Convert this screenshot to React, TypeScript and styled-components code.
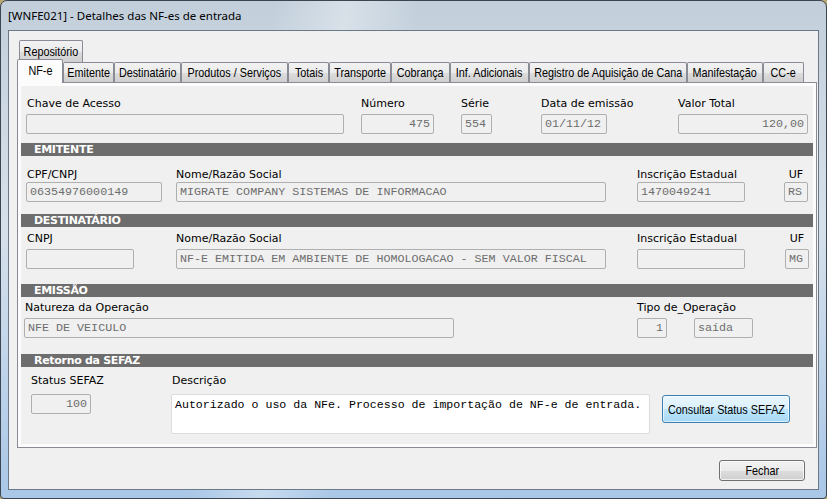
import React from 'react';
import styled, { createGlobalStyle } from 'styled-components';

const GlobalStyle = createGlobalStyle`
  body {
    margin: 0;
    background: #b8a870;
    font-family: "DejaVu Sans", Verdana, sans-serif;
  }
`;

const Window = styled.div`
  box-sizing: border-box;
  display: flex;
  flex-direction: column;
  width: 827px;
  height: 499px;
  padding: 29px 7px 8px 7px;
  border: 1px solid #3b4652;
  border-radius: 7px 7px 4px 4px;
  background:
    linear-gradient(100deg, rgba(255, 255, 255, 0) 30%, rgba(255, 255, 255, 0.35) 38%, rgba(255, 255, 255, 0) 46%),
    linear-gradient(180deg, #c2cfdb 0%, #d6e0ea 45%, #c3d6ea 70%, #a9c7e7 100%);
  position: relative;
`;

const TitleBar = styled.div`
  position: absolute;
  top: 7px;
  left: 7px;
  font-family: "Noto Sans", "Open Sans", sans-serif;
  font-size: 11.5px;
  line-height: 16px;
  color: #000;
`;

const Client = styled.div`
  flex: 1;
  display: flex;
  flex-direction: column;
  background: #f0f0f0;
  border: 1px solid #6b7886;
`;

const TabStrip = styled.div`
  padding-top: 9px;
`;

const TabRow = styled.div<{ $h: number }>`
  display: flex;
  height: ${p => p.$h}px;
  padding-left: 10px;
`;

/* Narrow system font look: Arial squeezed horizontally */
const Narrow = styled.span`
  display: inline-block;
  white-space: nowrap;
  font-family: "Liberation Sans", Arial, sans-serif;
  font-size: 13px;
  transform: scaleX(0.83);
  transform-origin: center;
`;

const Tab = styled.div<{ $w: number; $active?: boolean; $h: number }>`
  box-sizing: border-box;
  position: relative;
  display: flex;
  justify-content: center;
  align-items: ${p => (p.$active ? 'flex-start' : 'center')};
  padding-top: ${p => (p.$active ? 3 : 0)}px;
  width: ${p => p.$w + (p.$active ? 2 : 0)}px;
  height: ${p => p.$h}px;
  margin-left: ${p => (p.$active ? -2 : 0)}px;
  margin-top: ${p => (p.$active ? -3 : 0)}px;
  z-index: ${p => (p.$active ? 2 : 1)};
  border: 1px solid #898c95;
  border-bottom: none;
  border-radius: 2px 2px 0 0;
  background: ${p =>
    p.$active
      ? '#fcfcfc'
      : 'linear-gradient(180deg, #f2f2f2 0%, #ebebeb 50%, #dddddd 51%, #cfcfcf 100%)'};
  line-height: 15px;
  color: #000;
  overflow: visible;
`;

const TabPage = styled.div`
  flex: 1;
  margin: 0 1px 0 8px;
  padding: 3px;
  border: 1px solid #898c95;
  background: #fcfcfc;
  display: flex;
`;

const Content = styled.div`
  flex: 1;
  display: flex;
  flex-direction: column;
  background: #f0f0f0;
`;

const SectionBar = styled.div<{ $mt: number }>`
  height: 13px;
  margin-top: ${p => p.$mt}px;
  padding-left: 13px;
  background: #6d6d6d;
  color: #ffffff;
  font-weight: bold;
  font-size: 11px;
  letter-spacing: -0.3px;
  line-height: 13px;
  white-space: nowrap;
`;

const Row = styled.div<{ $mt: number; $gap: number }>`
  display: flex;
  align-items: flex-start;
  margin-top: ${p => p.$mt}px;
  --label-gap: ${p => p.$gap}px;
`;

const Field = styled.div<{ $w: number; $ml: number }>`
  display: flex;
  flex-direction: column;
  width: ${p => p.$w}px;
  margin-left: ${p => p.$ml}px;
  flex-shrink: 0;
`;

const Label = styled.div<{ $align?: string; $dx?: number }>`
  height: 14px;
  margin-bottom: var(--label-gap);
  padding-left: ${p => p.$dx ?? 0}px;
  font-size: 11px;
  line-height: 14px;
  color: #000;
  white-space: nowrap;
  text-align: ${p => p.$align || 'left'};
`;

const TextBox = styled.div<{ $w?: number; $right?: boolean }>`
  box-sizing: border-box;
  width: ${p => (p.$w ? `${p.$w}px` : '100%')};
  height: 20px;
  padding: 0 3px;
  border: 1px solid #afafaf;
  border-radius: 2px;
  background: #f0f0f0;
  font-family: "Liberation Mono", "Courier New", monospace;
  font-size: 11.7px;
  line-height: 18px;
  color: #6d6d6d;
  white-space: nowrap;
  overflow: hidden;
  text-align: ${p => (p.$right ? 'right' : 'left')};
`;

const Pair = styled.div`
  display: flex;
  gap: 27px;
`;

const TextArea = styled.div`
  box-sizing: border-box;
  height: 40px;
  padding: 3px 3px;
  border: 1px solid #dcdcdc;
  border-radius: 2px;
  background: #ffffff;
  font-family: "Liberation Mono", "Courier New", monospace;
  font-size: 11.6px;
  line-height: 14px;
  color: #000;
  white-space: nowrap;
`;

const Button = styled.button<{ $w: number; $h: number; $focus?: boolean; $mt?: number; $ml?: number }>`
  box-sizing: border-box;
  display: flex;
  justify-content: center;
  align-items: center;
  width: ${p => p.$w}px;
  height: ${p => p.$h}px;
  margin-top: ${p => p.$mt ?? 0}px;
  margin-left: ${p => p.$ml ?? 0}px;
  padding: 0;
  flex-shrink: 0;
  border: 1px solid ${p => (p.$focus ? '#3c7fb1' : '#707070')};
  border-radius: 3px;
  background: ${p =>
    p.$focus
      ? 'linear-gradient(180deg, #eaf6fd 0%, #d9f0fc 50%, #bee6fd 51%, #a7d9f5 100%)'
      : 'linear-gradient(180deg, #f2f2f2 0%, #ebebeb 50%, #dddddd 51%, #cfcfcf 100%)'};
  box-shadow: inset 0 0 0 1px ${p => (p.$focus ? 'rgba(255,255,255,0.6)' : 'rgba(255,255,255,0.7)')};
  color: #000;
  overflow: visible;
`;

const Footer = styled.div`
  display: flex;
  justify-content: flex-end;
  height: 41px;
  box-sizing: border-box;
  padding: 12px 13px 0 0;
`;

const tabs = [
  { label: 'NF-e', w: 44, active: true },
  { label: 'Emitente', w: 51 },
  { label: 'Destinatário', w: 67 },
  { label: 'Produtos / Serviços', w: 107 },
  { label: 'Totais', w: 41 },
  { label: 'Transporte', w: 62 },
  { label: 'Cobrança', w: 59 },
  { label: 'Inf. Adicionais', w: 79 },
  { label: 'Registro de Aquisição de Cana', w: 158 },
  { label: 'Manifestação', w: 76 },
  { label: 'CC-e', w: 41 },
];

const App: React.FC = () => {
  return (
    <>
      <GlobalStyle />
      <Window>
        <TitleBar>[WNFE021] - Detalhes das NF-es de entrada</TitleBar>
        <Client>
          <TabStrip>
            <TabRow $h={22}>
              <Tab $w={64} $h={22}>
                <Narrow>Repositório</Narrow>
              </Tab>
            </TabRow>
            <TabRow $h={20}>
              {tabs.map(t => (
                <Tab key={t.label} $w={t.w} $h={t.active ? 24 : 20} $active={t.active}>
                  <Narrow>{t.label}</Narrow>
                </Tab>
              ))}
            </TabRow>
          </TabStrip>

          <TabPage>
            <Content>
              <Row $mt={11} $gap={3}>
                <Field $w={318} $ml={5}>
                  <Label $dx={1}>Chave de Acesso</Label>
                  <TextBox />
                </Field>
                <Field $w={73} $ml={17}>
                  <Label>Número</Label>
                  <TextBox $right>475</TextBox>
                </Field>
                <Field $w={31} $ml={27}>
                  <Label>Série</Label>
                  <TextBox>554</TextBox>
                </Field>
                <Field $w={66} $ml={49}>
                  <Label>Data de emissão</Label>
                  <TextBox>01/11/12</TextBox>
                </Field>
                <Field $w={130} $ml={71}>
                  <Label>Valor Total</Label>
                  <TextBox $right>120,00</TextBox>
                </Field>
              </Row>

              <SectionBar $mt={9}>EMITENTE</SectionBar>
              <Row $mt={12} $gap={0}>
                <Field $w={136} $ml={5}>
                  <Label $dx={1}>CPF/CNPJ</Label>
                  <TextBox>06354976000149</TextBox>
                </Field>
                <Field $w={430} $ml={14}>
                  <Label>Nome/Razão Social</Label>
                  <TextBox>MIGRATE COMPANY SISTEMAS DE INFORMACAO</TextBox>
                </Field>
                <Field $w={108} $ml={31}>
                  <Label>Inscrição Estadual</Label>
                  <TextBox>1470049241</TextBox>
                </Field>
                <Field $w={24} $ml={39}>
                  <Label $align="center">UF</Label>
                  <TextBox>RS</TextBox>
                </Field>
              </Row>

              <SectionBar $mt={12}>DESTINATÁRIO</SectionBar>
              <Row $mt={5} $gap={3}>
                <Field $w={108} $ml={5}>
                  <Label $dx={1}>CNPJ</Label>
                  <TextBox />
                </Field>
                <Field $w={430} $ml={42}>
                  <Label>Nome/Razão Social</Label>
                  <TextBox>NF-E EMITIDA EM AMBIENTE DE HOMOLOGACAO - SEM VALOR FISCAL</TextBox>
                </Field>
                <Field $w={108} $ml={31}>
                  <Label>Inscrição Estadual</Label>
                  <TextBox />
                </Field>
                <Field $w={24} $ml={40}>
                  <Label $align="center">UF</Label>
                  <TextBox>MG</TextBox>
                </Field>
              </Row>

              <SectionBar $mt={15}>EMISSÃO</SectionBar>
              <Row $mt={4} $gap={3}>
                <Field $w={430} $ml={3}>
                  <Label $dx={1}>Natureza da Operação</Label>
                  <TextBox>NFE DE VEICULO</TextBox>
                </Field>
                <Field $w={116} $ml={183}>
                  <Label>Tipo de_Operação</Label>
                  <Pair>
                    <TextBox $w={30} $right>1</TextBox>
                    <TextBox $w={59}>saída</TextBox>
                  </Pair>
                </Field>
              </Row>

              <SectionBar $mt={16}>Retorno da SEFAZ</SectionBar>
              <Row $mt={7} $gap={6}>
                <Field $w={60} $ml={10}>
                  <Label>Status SEFAZ</Label>
                  <TextBox $right>100</TextBox>
                </Field>
                <Field $w={479} $ml={80}>
                  <Label $dx={1}>Descrição</Label>
                  <TextArea>Autorizado o uso da NFe. Processo de importação de NF-e de entrada.</TextArea>
                </Field>
                <Button $w={128} $h={28} $focus $mt={21} $ml={12}>
                  <Narrow>Consultar Status SEFAZ</Narrow>
                </Button>
              </Row>
            </Content>
          </TabPage>

          <Footer>
            <Button $w={86} $h={21}>
              <Narrow>Fechar</Narrow>
            </Button>
          </Footer>
        </Client>
      </Window>
    </>
  );
};

export default App;
